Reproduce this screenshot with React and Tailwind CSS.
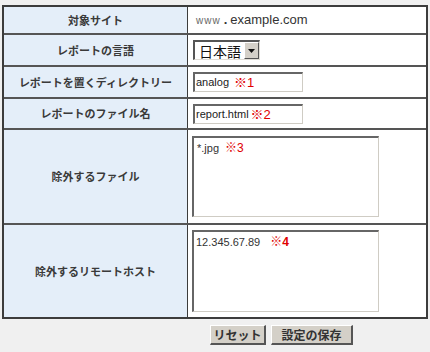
export default function App() {
  const font = { fontFamily: '"Noto Sans CJK JP", "Liberation Sans", sans-serif' };
  const lat = { fontFamily: '"Liberation Sans", "Noto Sans CJK JP", sans-serif' };
  const Label = ({ children }) => (
    <div className="w-[184px] bg-[#e4eef9] flex items-center justify-center text-[11px] font-bold text-[#3a3a3a] border-r border-[#3c3c3c]">
      {children}
    </div>
  );
  const Inset =
    "bg-white border-t-2 border-l-2 border-[#666] border-r border-b border-r-[#cfccc4] border-b-[#cfccc4]";
  const Btn =
    "h-[20px] bg-[#d4d0c8] border-t border-l border-[#ffffff] border-r-2 border-b-2 border-r-[#555] border-b-[#555] text-[12px] font-bold text-[#333] flex items-center justify-center leading-none";
  return (
    <div className="w-[430px] h-[352px] bg-[#f0f0f0] pt-[5px] pl-[2px]" style={font}>
      <div className="w-[426px] border-2 border-[#3c3c3c] flex flex-col bg-white">
        {/* row 1 */}
        <div className="h-[26px] flex">
          <Label>対象サイト</Label>
          <div className="flex-1 flex items-center pl-[8px] text-[13px] text-[#333]" style={lat}>
            <span className="text-[10px] tracking-[1px] text-[#666]">www</span>
            <span className="font-bold mx-[3px]">.</span>
            <span>example.com</span>
          </div>
        </div>
        {/* row 2 */}
        <div className="h-[32px] flex border-t-2 border-[#555]">
          <Label>レポートの言語</Label>
          <div className="flex-1 flex items-center pl-[5px]">
            <div className="w-[67px] h-[20px] flex border-t-2 border-l-2 border-[#555] border-r border-b border-r-[#e0ddd6] border-b-[#e0ddd6] bg-white">
              <div className="flex-1 flex items-center pl-[4px] text-[14px] text-[#111] leading-none">日本語</div>
              <div className="w-[15px] bg-[#d4d0c8] border-t border-l border-white border-r border-b border-r-[#555] border-b-[#555] flex items-center justify-center">
                <svg width="7" height="4" viewBox="0 0 7 4"><path d="M0 0h7L3.5 4z" fill="#111" /></svg>
              </div>
            </div>
          </div>
        </div>
        {/* row 3 */}
        <div className="h-[32px] flex border-t-2 border-[#555]">
          <Label>レポートを置くディレクトリー</Label>
          <div className="flex-1 flex items-center pl-[5px]">
            <div className={`w-[110px] h-[20px] ${Inset} flex items-center pl-[1px] text-[11px] text-[#222] leading-none`} style={lat}>
              <span>analog</span>
              <span className="text-[#e00000] text-[13px] ml-[5px]">※1</span>
            </div>
          </div>
        </div>
        {/* row 4 */}
        <div className="h-[31px] flex border-t-2 border-[#555]">
          <Label>レポートのファイル名</Label>
          <div className="flex-1 flex items-center pl-[5px]">
            <div className={`w-[110px] h-[20px] ${Inset} flex items-center pl-[1px] text-[11px] text-[#222] leading-none`} style={lat}>
              <span>report.html</span>
              <span className="text-[#e00000] text-[13px] ml-[2px]">※2</span>
            </div>
          </div>
        </div>
        {/* row 5 */}
        <div className="h-[95px] flex border-t-2 border-[#555]">
          <Label>除外するファイル</Label>
          <div className="flex-1 flex items-center pl-[4px]">
            <div className={`w-[187px] h-[81px] ${Inset} px-[3px] pt-[3px] text-[11px] text-[#333] leading-[14px]`} style={lat}>
              <span>*.jpg</span>
              <span className="text-[#e00000] text-[12px] ml-[6px]">※3</span>
            </div>
          </div>
        </div>
        {/* row 6 */}
        <div className="h-[94px] flex border-t-2 border-[#555]">
          <Label>除外するリモートホスト</Label>
          <div className="flex-1 flex items-center pl-[4px]">
            <div className={`w-[187px] h-[82px] ${Inset} px-[2px] pt-[3px] text-[11px] text-[#333] leading-[14px]`} style={lat}>
              <span>12.345.67.89</span>
              <span className="text-[#e00000] text-[12px] ml-[10px] font-bold">※4</span>
            </div>
          </div>
        </div>
      </div>
      <div className="flex gap-[5px] pl-[208px] pt-[6px]">
        <button className={`${Btn} w-[56px]`} style={font}>リセット</button>
        <button className={`${Btn} w-[82px]`} style={font}>設定の保存</button>
      </div>
    </div>
  );
}
